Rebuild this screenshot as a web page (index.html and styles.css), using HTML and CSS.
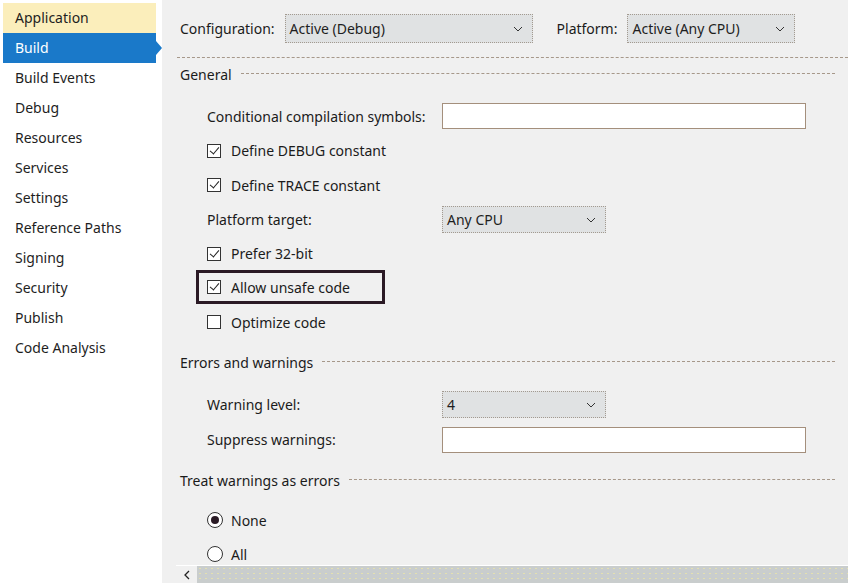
FILE: index.html
```html
<!DOCTYPE html>
<html>
<head>
<meta charset="utf-8">
<link rel="stylesheet" href="styles.css">
</head>
<body>
<div class="app">
  <nav class="sidebar">
    <div class="nav-item hover">Application</div>
    <div class="nav-item active">Build<span class="tip"></span></div>
    <div class="nav-item">Build Events</div>
    <div class="nav-item">Debug</div>
    <div class="nav-item">Resources</div>
    <div class="nav-item">Services</div>
    <div class="nav-item">Settings</div>
    <div class="nav-item">Reference Paths</div>
    <div class="nav-item">Signing</div>
    <div class="nav-item">Security</div>
    <div class="nav-item">Publish</div>
    <div class="nav-item">Code Analysis</div>
  </nav>
  <div class="panel">
    <div class="main">
      <div class="config-row">
        <span class="lbl">Configuration:</span>
        <div class="select sel-config">Active (Debug)<svg class="chev" width="10" height="6" viewBox="0 0 10 6"><path d="M1 1 L5 5 L9 1" fill="none" stroke="#333" stroke-width="1"/></svg></div>
        <span class="lbl plat">Platform:</span>
        <div class="select sel-plat">Active (Any CPU)<svg class="chev" width="10" height="6" viewBox="0 0 10 6"><path d="M1 1 L5 5 L9 1" fill="none" stroke="#333" stroke-width="1"/></svg></div>
      </div>
      <div class="top-rule"></div>

      <div class="section"><span>General</span><span class="rule"></span></div>
      <div class="form">
        <div class="row h34"><span class="lbl">Conditional compilation symbols:</span><div class="input wide"></div></div>
        <div class="row h35"><label class="check"><span class="box on"></span>Define DEBUG constant</label></div>
        <div class="row h34"><label class="check"><span class="box on"></span>Define TRACE constant</label></div>
        <div class="row h35"><span class="lbl">Platform target:</span><div class="select narrow">Any CPU<svg class="chev" width="10" height="6" viewBox="0 0 10 6"><path d="M1 1 L5 5 L9 1" fill="none" stroke="#333" stroke-width="1"/></svg></div></div>
        <div class="row h33"><label class="check"><span class="box on"></span>Prefer 32-bit</label></div>
        <div class="row h35"><div class="mark"><label class="check"><span class="box on"></span>Allow unsafe code</label></div></div>
        <div class="row h34"><label class="check"><span class="box"></span>Optimize code</label></div>
      </div>

      <div class="section s-err"><span>Errors and warnings</span><span class="rule"></span></div>
      <div class="form">
        <div class="row h35"><span class="lbl">Warning level:</span><div class="select narrow">4<svg class="chev" width="10" height="6" viewBox="0 0 10 6"><path d="M1 1 L5 5 L9 1" fill="none" stroke="#333" stroke-width="1"/></svg></div></div>
        <div class="row h35"><span class="lbl">Suppress warnings:</span><div class="input wide"></div></div>
      </div>

      <div class="section s-treat"><span>Treat warnings as errors</span><span class="rule"></span></div>
      <div class="form radios">
        <div class="row h34"><label class="radio"><span class="dot on"></span>None</label></div>
        <div class="row h34"><label class="radio"><span class="dot"></span>All</label></div>
      </div>
    </div>
    <div class="hscroll">
      <div class="arrow"><svg width="8" height="10" viewBox="0 0 8 10"><path d="M6 1 L2 5 L6 9" fill="none" stroke="#222" stroke-width="1.3"/></svg></div>
      <div class="thumb"></div>
    </div>
  </div>
</div>
</body>
</html>
```

FILE: styles.css
```css
* { box-sizing: border-box; }
html, body { margin: 0; padding: 0; }
body {
  width: 848px;
  height: 583px;
  overflow: hidden;
  font-family: "Noto Sans", "Open Sans", sans-serif;
  font-size: 14px;
  color: #1e1e1e;
  background: #f0f0f0;
}
.app { display: flex; height: 583px; }

.sidebar {
  width: 162px;
  flex: none;
  background: #ffffff;
  padding: 3px 6px 0 3px;
  display: flex;
  flex-direction: column;
}
.nav-item {
  height: 30px;
  line-height: 29px;
  padding-left: 12px;
  position: relative;
  white-space: nowrap;
}
.nav-item.hover { background: #fbeebb; }
.nav-item.active { background: #1a79c9; color: #ffffff; }
.tip {
  position: absolute;
  right: -6px;
  top: 8px;
  width: 0; height: 0;
  border-top: 7px solid transparent;
  border-bottom: 7px solid transparent;
  border-left: 6px solid #1a79c9;
}

.panel {
  flex: 1;
  display: flex;
  flex-direction: column;
  min-width: 0;
}
.main {
  flex: 1;
  padding: 14px 13px 0 18px;
  overflow: hidden;
}
.config-row {
  display: flex;
  align-items: center;
  height: 29px;
}
.lbl { white-space: nowrap; color: #1b1b1b; }
.config-row .lbl { margin-right: 10px; }
.config-row .plat { margin-left: 24px; }

.select {
  position: relative;
  height: 29px;
  background: #e0e2e3;
  border: 1px dotted #a39a90;
  display: flex;
  align-items: center;
  padding-left: 4px;
  white-space: nowrap;
}
.chev { position: absolute; right: 9px; top: 11px; }
.sel-config { width: 248px; }
.sel-plat { width: 168px; }

.top-rule {
  margin: 14px -13px 0 -3px;
  border-top: 1px dashed #a6988a;
}

.section {
  display: flex;
  align-items: center;
  height: 32px;
  color: #1b1b1b;
}
.section .rule {
  flex: 1;
  margin-left: 9px;
  border-top: 1px dashed #a6988a;
  height: 0;
  margin-top: -1px;
}

.form { padding-left: 27px; margin-top: 9px; }
.row {
  display: flex;
  align-items: center;
}
.h33 { height: 33px; }
.h34 { height: 34px; }
.h35 { height: 35px; }
.row .lbl { width: 235px; flex: none; }

.input {
  height: 26px;
  background: #ffffff;
  border: 1px solid #a48f7c;
}
.wide { width: 364px; }
.narrow { width: 164px; height: 27px; }
.narrow .chev { top: 10px; }

.check, .radio {
  display: flex;
  align-items: center;
  white-space: nowrap;
  color: #1b1b1b;
}
.box {
  width: 14px; height: 14px;
  border: 1px solid #333;
  background: #fff;
  margin-right: 10px;
  position: relative;
}
.box.on::after {
  content: "";
  position: absolute;
  left: 4px; top: 0px;
  width: 4px; height: 8px;
  border-right: 1.3px solid #222;
  border-bottom: 1.3px solid #222;
  transform: rotate(40deg);
}
.mark {
  border: 3px solid #2b1a25;
  height: 34px;
  width: 189px;
  margin-left: -11px;
  margin-top: -1px;
  padding-left: 8px;
  display: flex;
  align-items: center;
}

.s-err { margin-top: 7px; }
.s-treat { margin-top: 7px; }
.radios { margin-top: 7px; }
.dot {
  width: 16px; height: 16px;
  border: 1px solid #333;
  border-radius: 50%;
  background: #fff;
  margin-right: 8px;
  position: relative;
}
.dot.on::after {
  content: "";
  position: absolute;
  left: 3px; top: 3px;
  width: 8px; height: 8px;
  border-radius: 50%;
  background: #2a1a25;
}

.hscroll {
  height: 18px;
  flex: none;
  margin-left: 14px;
  border-top: 1px solid #ffffff;
  display: flex;
}
.arrow {
  width: 21px;
  display: flex;
  align-items: center;
  justify-content: center;
  background: #f0f0f0;
}
.thumb {
  flex: 1;
  background-color: #c9cdcd;
  background-image: radial-gradient(circle, #e4e0b0 0.7px, transparent 0.8px);
  background-size: 6px 5px;
}
```
